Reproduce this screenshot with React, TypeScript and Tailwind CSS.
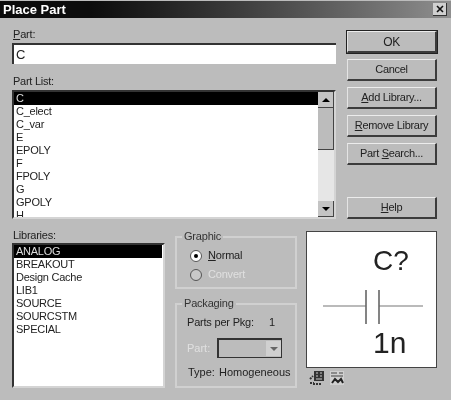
import type { ReactNode } from "react";

const partList = ["C", "C_elect", "C_var", "E", "EPOLY", "F", "FPOLY", "G", "GPOLY", "H"];
const libraries = ["ANALOG", "BREAKOUT", "Design Cache", "LIB1", "SOURCE", "SOURCSTM", "SPECIAL"];

function Button({ children, main }: { children: ReactNode; main?: boolean }) {
  return (
    <button
      type="button"
      className={`flex h-[22px] w-[90px] items-center justify-center border-t border-l border-t-[#ececec] border-l-[#e4e4e4] border-r-2 border-b-2 border-r-[#3c3c3c] border-b-[#3c3c3c] bg-[#bcbcbc] text-[11px] leading-none tracking-[-0.3px] text-[#222] ${main ? "outline outline-1 outline-[#222]" : ""}`}
    >
      {children}
    </button>
  );
}

function ScrollBar() {
  return (
    <div className="flex w-[16px] flex-col bg-[#e6e6e6]">
      <div className="flex h-[16px] items-center justify-center border-r border-b border-r-[#444] border-b-[#444] bg-[#c4c4c4]">
        <div className="h-0 w-0 border-x-[4px] border-b-[4px] border-x-transparent border-b-black" />
      </div>
      <div className="h-[42px] border-r border-b border-r-[#444] border-b-[#444] bg-[#bcbcbc]" />
      <div className="flex-1" />
      <div className="flex h-[16px] items-center justify-center border-r border-b border-r-[#444] border-b-[#444] bg-[#c4c4c4]">
        <div className="h-0 w-0 border-x-[4px] border-t-[4px] border-x-transparent border-t-black" />
      </div>
    </div>
  );
}

function Group({ title, className, children }: { title: string; className: string; children: ReactNode }) {
  return (
    <fieldset className={`w-[122px] border-2 border-[#d0d0d0] ${className}`}>
      <legend className="ml-[5px] px-[2px] text-[11px] leading-[13px] tracking-[-0.2px] text-[#333]">{title}</legend>
      {children}
    </fieldset>
  );
}

function Radio({ checked, disabled, children }: { checked?: boolean; disabled?: boolean; children: ReactNode }) {
  return (
    <div className={`flex h-[19px] items-center gap-[6px] pl-[13px] text-[11px] tracking-[-0.2px] ${disabled ? "text-[#e0e0e0]" : "text-[#222]"}`}>
      <span
        className={`flex h-[12px] w-[12px] items-center justify-center rounded-full border border-[#555] ${disabled ? "bg-[#c8c8c8]" : "bg-white"}`}
      >
        {checked && <span className="h-[4px] w-[4px] rounded-full bg-black" />}
      </span>
      <span>{children}</span>
    </div>
  );
}

export default function App() {
  return (
    <div className="flex h-[400px] w-[451px] flex-col overflow-hidden bg-[#bcbcbc] pt-px font-['Liberation_Sans',Arial,sans-serif] blur-[0.4px]">
      <div className="flex h-[17px] shrink-0 items-center justify-between bg-gradient-to-r from-[#0c0c0c] from-20% to-[#8f8f8f] pr-[4px] pl-[3px]">
        <span className="text-[13px] font-bold text-white">Place Part</span>
        <span className="flex h-[13px] w-[14px] items-center justify-center border-r border-b border-r-[#333] border-b-[#333] bg-[#d0d0d0]">
          <svg width="8" height="8" viewBox="0 0 8 8">
            <path d="M1 1 L7 7 M7 1 L1 7" stroke="#111" strokeWidth="1.6" />
          </svg>
        </span>
      </div>

      <div className="flex gap-[11px] pt-[13px] pl-[12px]">
        <div className="flex w-[324px] flex-col">
          <label className="h-[12px] pl-px text-[11px] leading-[7px] tracking-[-0.2px] text-[#222]">
            <u>P</u>art:
          </label>
          <input
            readOnly
            value="C"
            className="h-[21px] border-t-2 border-l-2 border-t-[#333] border-l-[#333] bg-white pl-[2px] text-[13px] text-[#222] outline-none"
          />
          <label className="mt-[11px] h-[15px] pl-px text-[11px] leading-[13px] tracking-[-0.25px] text-[#222]">Part List:</label>
          <div className="flex h-[129px] justify-between overflow-hidden border-t-2 border-l-2 border-t-[#333] border-l-[#333] border-r-2 border-b-2 border-r-[#d4d4d4] border-b-[#d4d4d4] bg-white">
            <ul className="flex-1">
              {partList.map((item, i) => (
                <li
                  key={item}
                  className={`h-[13px] pl-[2px] text-[11px] leading-[13px] tracking-[-0.25px] ${i === 0 ? "bg-black text-[#ddd]" : "text-[#222]"}`}
                >
                  {item}
                </li>
              ))}
            </ul>
            <ScrollBar />
          </div>
        </div>

        <div className="flex flex-col gap-[6px]">
          <Button main>
            <span className="text-[12px]">OK</span>
          </Button>
          <Button>Cancel</Button>
          <Button>
            <span>
              <u>A</u>dd Library...
            </span>
          </Button>
          <Button>
            <span>
              <u>R</u>emove Library
            </span>
          </Button>
          <Button>
            <span>
              Part <u>S</u>earch...
            </span>
          </Button>
          <div className="mt-[26px]">
            <Button>
              <span>
                <u>H</u>elp
              </span>
            </Button>
          </div>
        </div>
      </div>

      <div className="flex pt-[11px] pl-[12px]">
        <div className="flex w-[153px] flex-col">
          <label className="h-[13px] pl-px text-[11px] leading-[11px] tracking-[-0.25px] text-[#222]">Libraries:</label>
          <ul className="h-[145px] border-t-2 border-l-2 border-t-[#333] border-l-[#333] border-r-2 border-b-2 border-r-[#d4d4d4] border-b-[#d4d4d4] bg-white">
            {libraries.map((item, i) => (
              <li
                key={item}
                className={`h-[13px] pl-[2px] text-[11px] leading-[13px] tracking-[-0.25px] ${i === 0 ? "w-[148px] bg-black text-[#ddd]" : "text-[#222]"}`}
              >
                {item}
              </li>
            ))}
          </ul>
        </div>

        <div className="ml-[10px] flex flex-col gap-[8px]">
          <Group title="Graphic" className="h-[59px]">
            <div className="mt-[3px]">
              <Radio checked>
                <u>N</u>ormal
              </Radio>
              <Radio disabled>Convert</Radio>
            </div>
          </Group>
          <Group title="Packaging" className="h-[91px] text-[11px] text-[#222]">
            <div className="mt-[5px] flex h-[15px] items-center justify-between pr-[20px] pl-[10px] tracking-[-0.2px]">
              <span>Parts per Pkg:</span>
              <span>1</span>
            </div>
            <div className="mt-[8px] flex h-[20px] items-center pl-[10px]">
              <span className="w-[30px] text-[#e0e0e0]">Part:</span>
              <div className="flex h-[20px] w-[65px] items-center justify-end border-t-2 border-l-2 border-t-[#333] border-l-[#333] border-r border-b border-r-[#333] border-b-[#333] bg-[#bcbcbc]">
                <div className="flex h-[15px] w-[15px] items-center justify-center bg-[#d0d0d0]">
                  <div className="h-0 w-0 border-x-[4px] border-t-[4px] border-x-transparent border-t-[#666]" />
                </div>
              </div>
            </div>
            <div className="mt-[7px] flex pl-[11px] leading-[14px]">
              <span className="w-[31px]">Type:</span>
              <span>Homogeneous</span>
            </div>
          </Group>
        </div>

        <div className="ml-[9px] flex flex-col pt-px">
          <div className="h-[137px] w-[131px] border border-[#444] bg-white">
            <svg width="129" height="135" viewBox="0 0 129 135">
              <text x="66" y="38" fontFamily="Liberation Sans" fontSize="28" fill="#222">
                C?
              </text>
              <path d="M16 74 H59 M72 74 H116" stroke="#777" strokeWidth="1.2" />
              <path d="M59 58 V92 M72 58 V92" stroke="#666" strokeWidth="1.6" />
              <text x="66" y="121" fontFamily="Liberation Sans" fontSize="30" fill="#222">
                1n
              </text>
            </svg>
          </div>
          <div className="mt-[2px] flex gap-[4px] pl-[3px]">
            <svg width="16" height="16" viewBox="0 0 16 16">
              <rect x="5" y="1" width="10" height="10" fill="#333" />
              <path d="M7 3 H9 M11 3 H13 M7 6 H9 M11 6 H13 M7 9 H13" stroke="#ccc" />
              <path d="M1 9 L4 6 M1 13 H5 M4 14 H13" stroke="#333" strokeWidth="2" strokeDasharray="2 1" />
            </svg>
            <svg width="16" height="16" viewBox="0 0 16 16">
              <rect x="1" y="1" width="14" height="14" fill="#d0d0d0" />
              <path d="M2 3 H8 M10 3 H14 M2 6 H14" stroke="#444" />
              <path d="M3 13 L6 9 L9 12 L12 9 L14 13" stroke="#222" strokeWidth="2" fill="none" />
            </svg>
          </div>
        </div>
      </div>
    </div>
  );
}
